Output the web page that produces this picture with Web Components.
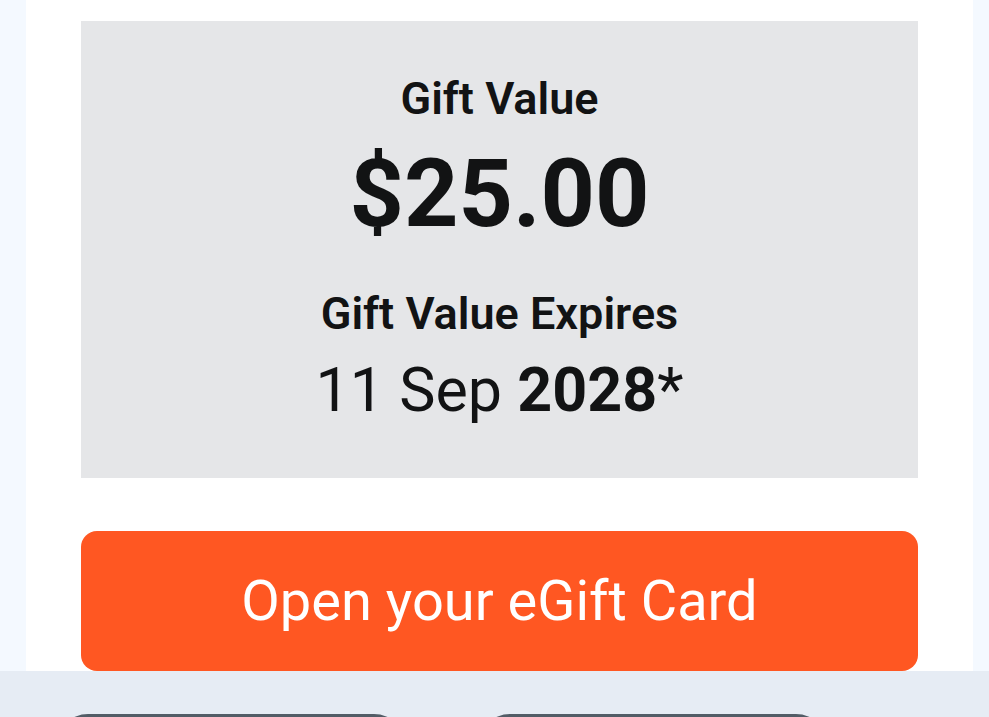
<!DOCTYPE html>
<html lang="en"><head><meta charset="utf-8"><title>Your eGift Card</title>
<style>body{margin:0;background:#f4f9ff;font-family:Roboto,sans-serif;color:#121314}</style></head>
<body>
<egift-page>
<gift-summary>
<gift-field size="large"><span slot="label">Gift Value</span>$25.00</gift-field>
<gift-field><span slot="label">Gift Value Expires</span>11 Sep <b>2028</b>*</gift-field>
</gift-summary>
<gift-link>Open your eGift Card</gift-link>
<browser-bar slot="footer"></browser-bar>
</egift-page>
<script>
const define=(name,html)=>customElements.define(name,class extends HTMLElement{
constructor(){super();this.attachShadow({mode:'open'}).innerHTML=html;}
});
define('egift-page',`<style>
:host{display:flex;flex-direction:column;height:100vh;overflow:hidden}
main{display:flex;flex-direction:column;flex:none;gap:53px;background:#fff;margin:0 16px 0 26px;padding:21px 55px 0}
</style><main><slot></slot></main><slot name="footer"></slot>`);
define('gift-summary',`<style>
:host{display:flex;flex-direction:column;gap:35px;background:#e5e6e8;padding:52px 24px 48px;text-align:center}
</style><slot></slot>`);
define('gift-field',`<style>
:host{display:block}
.label{font-size:45px;line-height:52px;font-weight:600}
.value{font-size:61px;line-height:80px;margin-top:10px}
:host([size=large]) .value{font-size:95px;line-height:118px;font-weight:700}
</style><div class="label"><slot name="label"></slot></div><div class="value"><slot></slot></div>`);
define('gift-link',`<style>
:host{display:block}
a{display:block;background:#ff5722;color:#fff;border-radius:16px;padding:34px 24px;text-align:center;text-decoration:none;font-size:56px;line-height:72px}
</style><a href="#"><slot></slot></a>`);
define('browser-bar',`<style>
:host{display:grid;grid-template-columns:1fr 1fr;gap:72px;flex:1;min-height:0;background:#e6ecf4;padding:43px 161px 0 56px;box-sizing:border-box;overflow:hidden}
i{height:80px;border-radius:32px;background:#525c66}
</style><i></i><i></i>`);
</script></body></html>
